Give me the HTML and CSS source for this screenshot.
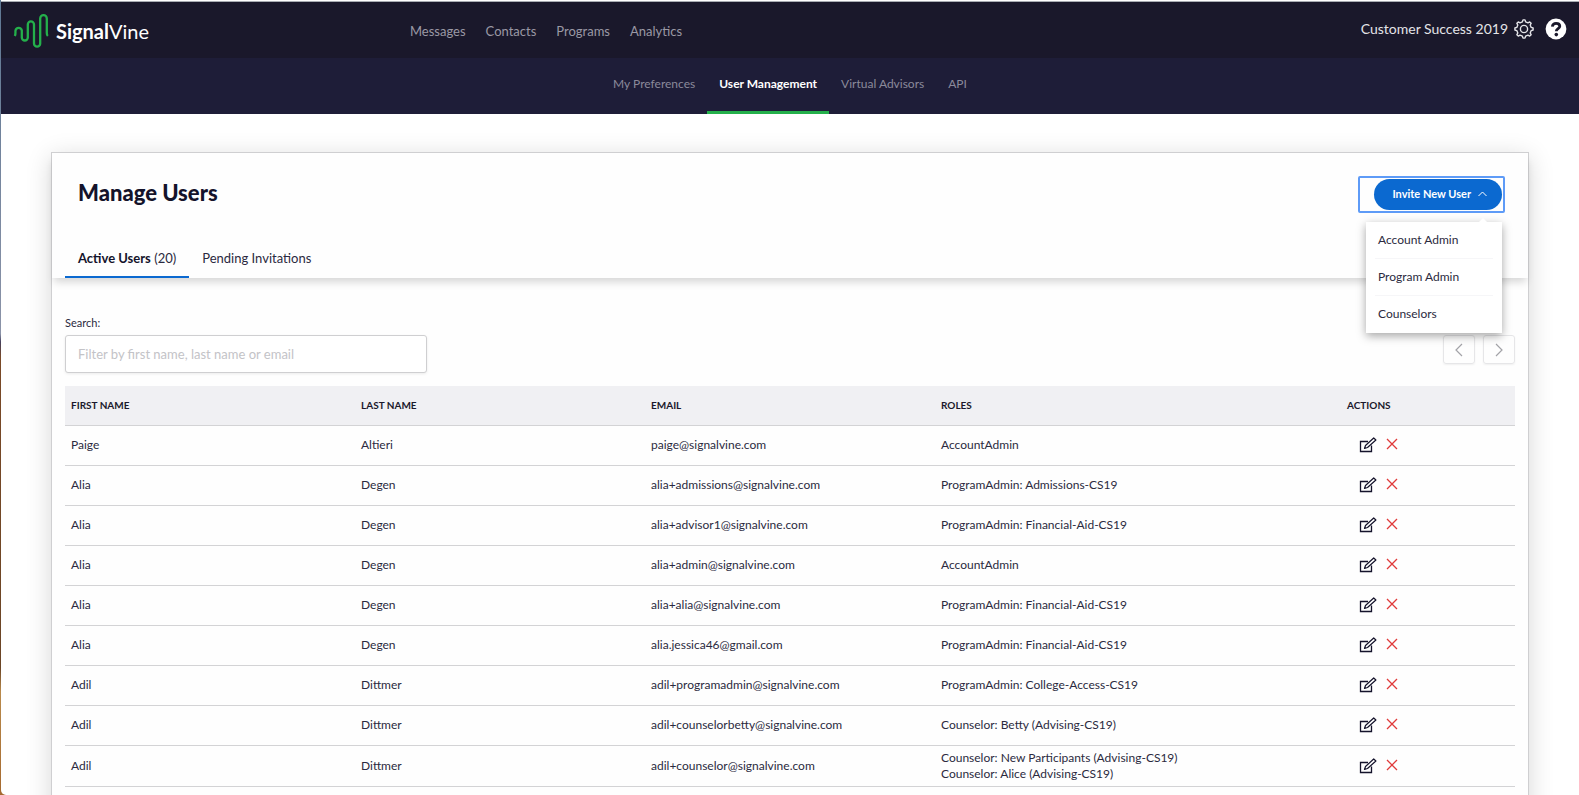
FILE: index.html
```html
<!DOCTYPE html>
<html lang="en">
<head>
  <meta charset="UTF-8" />
  <meta name="viewport" content="width=device-width, initial-scale=1.0"/>
  <title>SignalVine - User Management</title>
  <link rel="stylesheet" href="styles.css">
</head>
<body>

  <svg class="sprite" aria-hidden="true">
    <symbol id="edit" viewBox="0 0 18 16">
      <path d="M9 4.500H1.500V14.500H12.500V8.500" fill="none" stroke="currentColor" stroke-width="1.300"/>
      <path d="M5.500 11.500L6.500 8.500L14.700 1L16.900 3L8.500 10.500Z" fill="none" stroke="currentColor" stroke-width="1.200" stroke-linejoin="round"/>
    </symbol>
    <symbol id="cross" viewBox="0 0 12 12">
      <path d="M1 1L11 11M11 1L1 11" fill="none" stroke="currentColor" stroke-width="1.300"/>
    </symbol>
  </svg>

  <div class="window">
    <header class="topbar">
      <a class="logo" href="#">
        <svg width="36" height="36" viewBox="0 0 36 36" aria-hidden="true">
          <path class="vine" d="M1.800 23C3 21 2.200 19 2.500 17.500A3.200 3.200 0 0 1 8.800 17.500V24.500A3 3 0 0 0 14.800 24.500V11.500A3.100 3.100 0 0 1 21 11.500V30.500A3.100 3.100 0 0 0 27.200 30.500V5.500A3.300 3.300 0 0 1 33.800 5.500V20C33.800 21.500 34 22.300 34.800 23"/>
        </svg>
        <span><b>Signal</b>Vine</span>
      </a>
      <nav class="main-nav">
        <a href="#">Messages</a>
        <a href="#">Contacts</a>
        <a href="#">Programs</a>
        <a href="#">Analytics</a>
      </nav>
      <div class="account">
        <span>Customer Success 2019</span>
        <button class="icon-btn" aria-label="Settings">
          <svg width="20" height="20" viewBox="0 0 20 20" fill="none" stroke="#e4e4e8" stroke-width="1.400" stroke-linejoin="round">
            <path d="M8.400 2.800L9 0.900H11L11.600 2.800L14 3.800L15.700 2.900L17.100 4.300L16.200 6L17.200 8.400L19.100 9V11L17.200 11.600L16.200 14L17.100 15.700L15.700 17.100L14 16.200L11.600 17.200L11 19.100H9L8.400 17.200L6 16.200L4.300 17.100L2.900 15.700L3.800 14L2.800 11.600L0.900 11V9L2.800 8.400L3.800 6L2.900 4.300L4.300 2.900L6 3.800Z"/>
            <circle cx="10" cy="10" r="3.600"/>
          </svg>
        </button>
        <button class="icon-btn help" aria-label="Help">
          <svg width="22" height="22" viewBox="0 0 22 22">
            <circle cx="11" cy="11" r="10.400" fill="#fff"/>
            <path d="M7.300 8.600C7.600 6.500 9.200 5.300 11.100 5.300C13.300 5.300 14.800 6.500 14.800 8.300C14.800 10.600 11.300 10.600 11.300 13.200" fill="none" stroke="#1a182b" stroke-width="2.800"/>
            <circle cx="11.300" cy="16.600" r="1.800" fill="#1a182b"/>
          </svg>
        </button>
      </div>
    </header>

    <nav class="sub-nav">
      <a href="#">My Preferences</a>
      <a class="active" href="#">User Management</a>
      <a href="#">Virtual Advisors</a>
      <a href="#">API</a>
    </nav>

    <main class="card">
      <div class="card-head">
        <div class="title-row">
          <h1>Manage Users</h1>
          <div class="invite">
            <div class="focus-ring">
              <button class="invite-btn" aria-expanded="true">
                Invite New User
                <svg width="9" height="6" viewBox="0 0 9 6" aria-hidden="true"><path d="M0.500 5L4.500 1L8.500 5" fill="none" stroke="currentColor"/></svg>
              </button>
            </div>
            <ul class="menu">
              <li><a href="#">Account Admin</a></li>
              <li><a href="#">Program Admin</a></li>
              <li><a href="#">Counselors</a></li>
            </ul>
          </div>
        </div>
        <div class="tabs">
          <button class="tab active"><b>Active Users</b> (20)</button>
          <button class="tab">Pending Invitations</button>
        </div>
      </div>

      <div class="card-body">
        <div class="toolbar">
          <div class="search">
            <label for="search">Search:</label>
            <input id="search" type="text" placeholder="Filter by first name, last name or email">
          </div>
          <div class="pager">
            <button aria-label="Previous page"><svg width="8" height="14" viewBox="0 0 8 14"><path d="M7 1L1 7L7 13"/></svg></button>
            <button aria-label="Next page"><svg width="8" height="14" viewBox="0 0 8 14"><path d="M1 1L7 7L1 13"/></svg></button>
          </div>
        </div>

        <table class="users">
          <thead>
            <tr><th>First Name</th><th>Last Name</th><th>Email</th><th class="roles">Roles</th><th class="actions">Actions</th></tr>
          </thead>
          <tbody id="rows"></tbody>
        </table>
      </div>
    </main>
  </div>

  <script>
    const users = [
      ['Paige', 'Altieri', 'paige@signalvine.com', ['AccountAdmin']],
      ['Alia', 'Degen', 'alia+admissions@signalvine.com', ['ProgramAdmin: Admissions-CS19']],
      ['Alia', 'Degen', 'alia+advisor1@signalvine.com', ['ProgramAdmin: Financial-Aid-CS19']],
      ['Alia', 'Degen', 'alia+admin@signalvine.com', ['AccountAdmin']],
      ['Alia', 'Degen', 'alia+alia@signalvine.com', ['ProgramAdmin: Financial-Aid-CS19']],
      ['Alia', 'Degen', 'alia.jessica46@gmail.com', ['ProgramAdmin: Financial-Aid-CS19']],
      ['Adil', 'Dittmer', 'adil+programadmin@signalvine.com', ['ProgramAdmin: College-Access-CS19']],
      ['Adil', 'Dittmer', 'adil+counselorbetty@signalvine.com', ['Counselor: Betty (Advising-CS19)']],
      ['Adil', 'Dittmer', 'adil+counselor@signalvine.com', ['Counselor: New Participants (Advising-CS19)', 'Counselor: Alice (Advising-CS19)']]
    ];

    document.getElementById('rows').innerHTML = users.map(([first, last, email, roles]) => `
      <tr>
        <td>${first}</td>
        <td>${last}</td>
        <td>${email}</td>
        <td>${roles.join('<br>')}</td>
        <td>
          <div class="row-actions">
            <button class="icon-btn" aria-label="Edit"><svg width="18" height="16"><use href="#edit"/></svg></button>
            <button class="icon-btn remove" aria-label="Remove"><svg width="12" height="12"><use href="#cross"/></svg></button>
          </div>
        </td>
      </tr>`).join('');
  </script>

</body>
</html>
```
FILE: styles.css
```css
* {
  box-sizing: border-box;
}

body {
  margin: 0;
  height: 100vh;
  overflow: hidden;
  padding-left: 1px;
  font-family: Lato, sans-serif;
  font-size: 12px;
  line-height: 16px;
  color: #2b2a40;
  background: linear-gradient(#5f7894, #8b93a8 42%, #45405c 43%, #7a4a28 45%, #6b4526 84%, #b98a4c 87%, #a5692f);
}

a {
  color: inherit;
  text-decoration: none;
}

button {
  font: inherit;
  color: inherit;
  background: none;
  border: none;
  padding: 0;
  cursor: pointer;
}

svg {
  display: block;
}

.sprite {
  position: absolute;
  width: 0;
  height: 0;
}

.window {
  height: 100%;
  overflow: hidden;
  padding-top: 1px;
  background: #fff;
  border-bottom-left-radius: 5px;
}

/* header */
.topbar {
  display: flex;
  align-items: center;
  height: 57px;
  padding: 2px 12px 0;
  border-top: 1px solid #a9adb3;
  background: #1a182b;
}

.logo {
  display: flex;
  align-items: center;
  gap: 7px;
  width: 397px;
  font-size: 20px;
  line-height: 24px;
  color: #fff;
}

.logo b {
  font-weight: 700;
}

.vine {
  fill: none;
  stroke: #24b04b;
  stroke-width: 2.3;
}

.main-nav {
  display: flex;
  gap: 20px;
  font-size: 13px;
  color: #9a99a5;
}

.account {
  display: flex;
  align-items: center;
  gap: 6px;
  margin-left: auto;
  padding-bottom: 5px;
  font-size: 14px;
  color: #e4e4e8;
}

.help {
  margin-left: 5px;
}

.sub-nav {
  display: flex;
  justify-content: center;
  height: 56px;
  color: #8b8a9b;
  background: #1e1d38;
}

.sub-nav a {
  padding: 18px 12px 0;
  border-bottom: 3px solid transparent;
}

.sub-nav .active {
  color: #fff;
  font-weight: 700;
  border-color: #24b04b;
}

/* card */
.card {
  margin: 38px 50px 0;
  min-height: 700px;
  border: 1px solid #cfcfd1;
  background: #fefefe;
  box-shadow: 0 5px 24px rgba(0, 0, 0, 0.16);
}

.card-head {
  padding: 23px 23px 0 13px;
  box-shadow: 0 6px 8px -2px rgba(0, 0, 0, 0.16);
}

.title-row {
  display: flex;
  justify-content: space-between;
}

h1 {
  margin: 5px 0 0 13px;
  font-size: 22px;
  line-height: 24px;
  font-weight: 900;
  color: #14132b;
}

.invite {
  position: relative;
}

.focus-ring {
  padding: 1px 1px 1px 14px;
  border: 2px solid #5e9bf7;
  border-radius: 2px;
}

.invite-btn {
  display: flex;
  align-items: center;
  gap: 7px;
  height: 31px;
  padding: 0 15px 2px 18px;
  border-radius: 16px;
  font-size: 11px;
  font-weight: 700;
  color: #fff;
  background: #0b69d0;
}

.menu {
  position: absolute;
  top: 46px;
  right: 3px;
  width: 136px;
  margin: 0;
  padding: 0 9px 1px;
  list-style: none;
  background: #fff;
  box-shadow: 0 3px 9px rgba(0, 0, 0, 0.35);
}

.menu::before {
  content: "";
  position: absolute;
  top: -4px;
  right: 15px;
  border: 4px solid transparent;
  border-top: 0;
  border-bottom-color: #fff;
}

.menu li + li {
  border-top: 1px solid #f6f6f8;
}

.menu a {
  display: block;
  padding: 10px 3px;
}

.tabs {
  display: flex;
  margin-top: 20px;
  font-size: 13px;
}

.tab {
  height: 45px;
  padding: 6px 13px 0;
  border-bottom: 2px solid transparent;
}

.tab.active {
  border-color: #0b69d0;
}

.tab b {
  color: #14132b;
}

.card-body {
  padding: 37px 13px 0;
}

.toolbar {
  display: flex;
  justify-content: space-between;
  align-items: flex-end;
  margin-bottom: 13px;
}

.search label {
  display: block;
  margin-bottom: 4px;
  font-size: 11px;
}

.search input {
  display: block;
  width: 362px;
  height: 38px;
  padding: 0 12px;
  border: 1px solid #cfcfd1;
  border-radius: 3px;
  font: inherit;
  font-size: 13px;
  background: #fff;
  box-shadow: 0 1px 3px rgba(0, 0, 0, 0.08);
}

.search input::placeholder {
  color: #c3c3c7;
}

.pager {
  display: flex;
  gap: 8px;
  margin-bottom: 9px;
}

.pager button {
  display: flex;
  align-items: center;
  justify-content: center;
  width: 32px;
  height: 29px;
  border: 1px solid #e6e6e8;
  border-radius: 3px;
  box-shadow: 0 1px 2px rgba(0, 0, 0, 0.06);
}

.pager path {
  fill: none;
  stroke: #a3a3a8;
  stroke-width: 1.2;
}

/* users table */
.users {
  width: 100%;
  table-layout: fixed;
  border-collapse: collapse;
}

.users th,
.users td {
  height: 40px;
  padding: 4px 6px;
  text-align: left;
  border-bottom: 1px solid #d3d3d5;
}

.users th {
  height: 39px;
  font-size: 10px;
  text-transform: uppercase;
  color: #1a182b;
  background: #f0f0f3;
}

.users .roles {
  width: 28%;
}

.users .actions {
  width: 12%;
}

.row-actions {
  display: flex;
  align-items: flex-start;
  gap: 9px;
  padding-left: 12px;
  color: #14132b;
}

.remove {
  padding-top: 1px;
  color: #e03a3a;
}
```
